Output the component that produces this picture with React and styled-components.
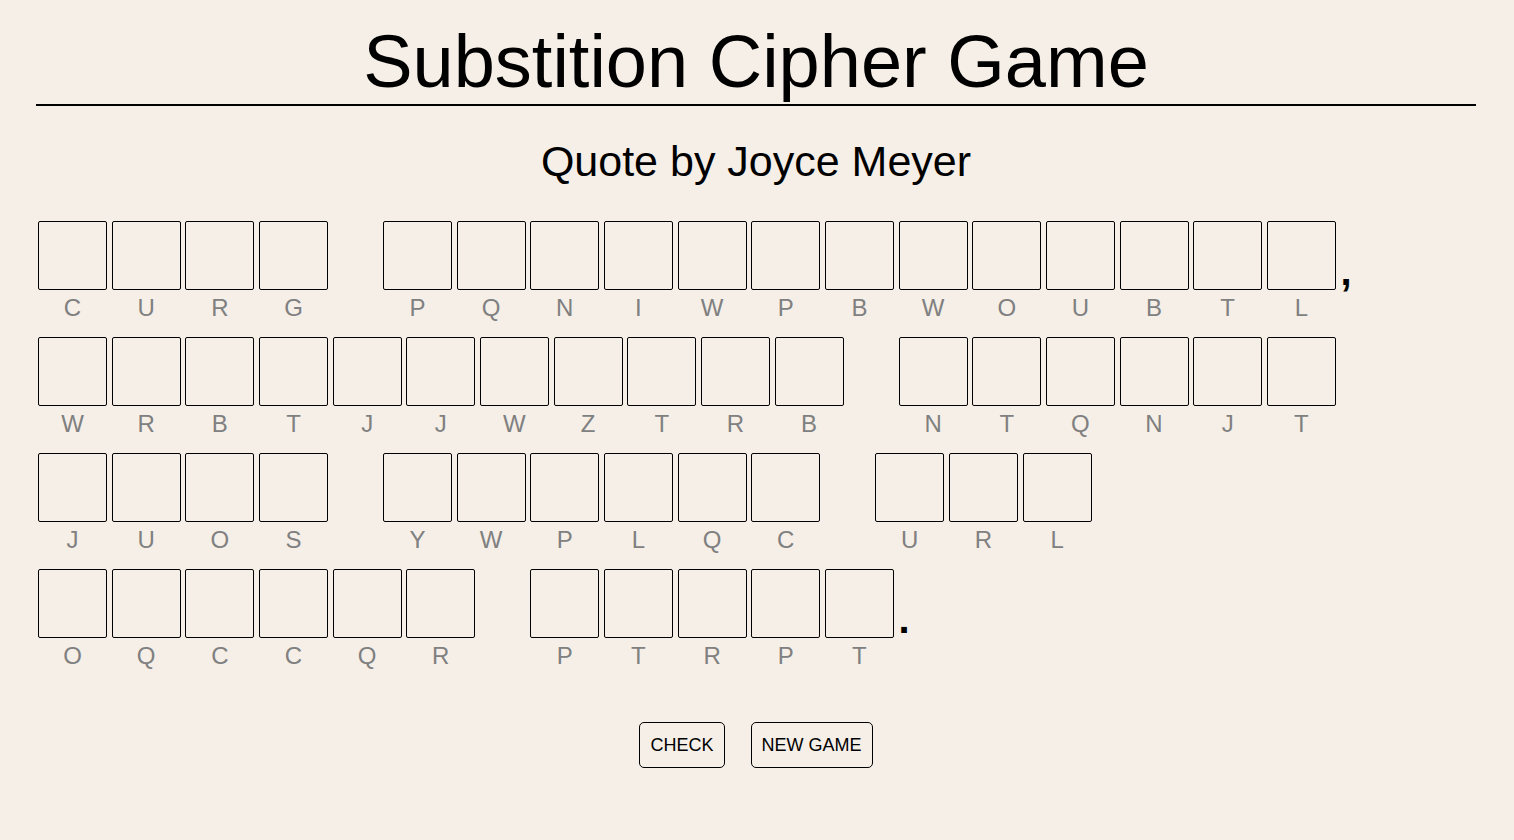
import React, { useState } from "react";
import styled, { createGlobalStyle } from "styled-components";

const QUOTE = "CURG PQNIWPBWOUBTL, WRBTJJWZTRB NTQNJT JUOS YWPLQC URL OQCCQR PTRPT.";

const GlobalStyle = createGlobalStyle`
  body {
    margin: 0;
    background: #f5efe8;
    font-family: "Liberation Sans", Arial, sans-serif;
    color: #000;
  }
`;

export default function App() {
  const [guesses, setGuesses] = useState({});

  const words = QUOTE.split(" ").map((word) => {
    const match = word.match(/^([A-Z]+)([^A-Z]*)$/);
    return { letters: match[1].split(""), punct: match[2] };
  });

  const onGuess = (letter, value) =>
    setGuesses({ ...guesses, [letter]: value.slice(-1).toUpperCase() });

  return (
    <>
      <GlobalStyle />
      <StyledPage>
        <StyledTitle>Substition Cipher Game</StyledTitle>
        <StyledAuthor>Quote by Joyce Meyer</StyledAuthor>
        <StyledQuote>
          {words.map((word, wi) => (
            <StyledWord key={wi}>
              {word.letters.map((letter, li) => (
                <StyledCell key={li}>
                  <StyledBox
                    type="text"
                    value={guesses[letter] || ""}
                    onChange={(e) => onGuess(letter, e.target.value)}
                  />
                  <StyledCipherLetter>{letter}</StyledCipherLetter>
                </StyledCell>
              ))}
              {word.punct && <StyledPunct>{word.punct}</StyledPunct>}
            </StyledWord>
          ))}
        </StyledQuote>
        <StyledButtons>
          <StyledButton type="button">CHECK</StyledButton>
          <StyledButton type="button" onClick={() => setGuesses({})}>
            NEW GAME
          </StyledButton>
        </StyledButtons>
      </StyledPage>
    </>
  );
}

const StyledPage = styled.main`
  display: flex;
  flex-direction: column;
  padding: 19px 38px 0 36px;
`;

const StyledTitle = styled.h1`
  margin: 0;
  padding-bottom: 0;
  border-bottom: 2px solid #000;
  text-align: center;
  font-size: 74px;
  font-weight: normal;
  line-height: normal;
`;

const StyledAuthor = styled.h2`
  margin: 31px 0 0;
  text-align: center;
  font-size: 43px;
  font-weight: normal;
  line-height: normal;
`;

const StyledQuote = styled.section`
  display: flex;
  flex-wrap: wrap;
  column-gap: 55px;
  row-gap: 15px;
  margin-top: 35px;
  padding-left: 2px;
`;

const StyledWord = styled.div`
  display: flex;
  gap: 4.67px;
  align-items: flex-start;
`;

const StyledCell = styled.div`
  display: flex;
  flex-direction: column;
  align-items: center;
  width: 69px;
`;

const StyledBox = styled.input`
  box-sizing: border-box;
  width: 69px;
  height: 69px;
  margin: 0;
  padding: 0;
  border: 1px solid #000;
  border-radius: 2px;
  background: transparent;
  text-align: center;
  font-family: "Liberation Sans", Arial, sans-serif;
  font-size: 32px;
  outline: none;
`;

const StyledCipherLetter = styled.span`
  margin-top: 4px;
  font-size: 24px;
  line-height: normal;
  color: gray;
`;

const StyledPunct = styled.span`
  padding-top: 30px;
  font-size: 40px;
  font-weight: bold;
  line-height: 40px;
`;

const StyledButtons = styled.div`
  display: flex;
  justify-content: center;
  gap: 26px;
  margin-top: 52px;
`;

const StyledButton = styled.button`
  height: 46px;
  padding: 0 10px;
  border: 1px solid #000;
  border-radius: 5px;
  background: transparent;
  color: #000;
  font-family: "Liberation Sans", Arial, sans-serif;
  font-size: 18px;
  cursor: pointer;
`;
